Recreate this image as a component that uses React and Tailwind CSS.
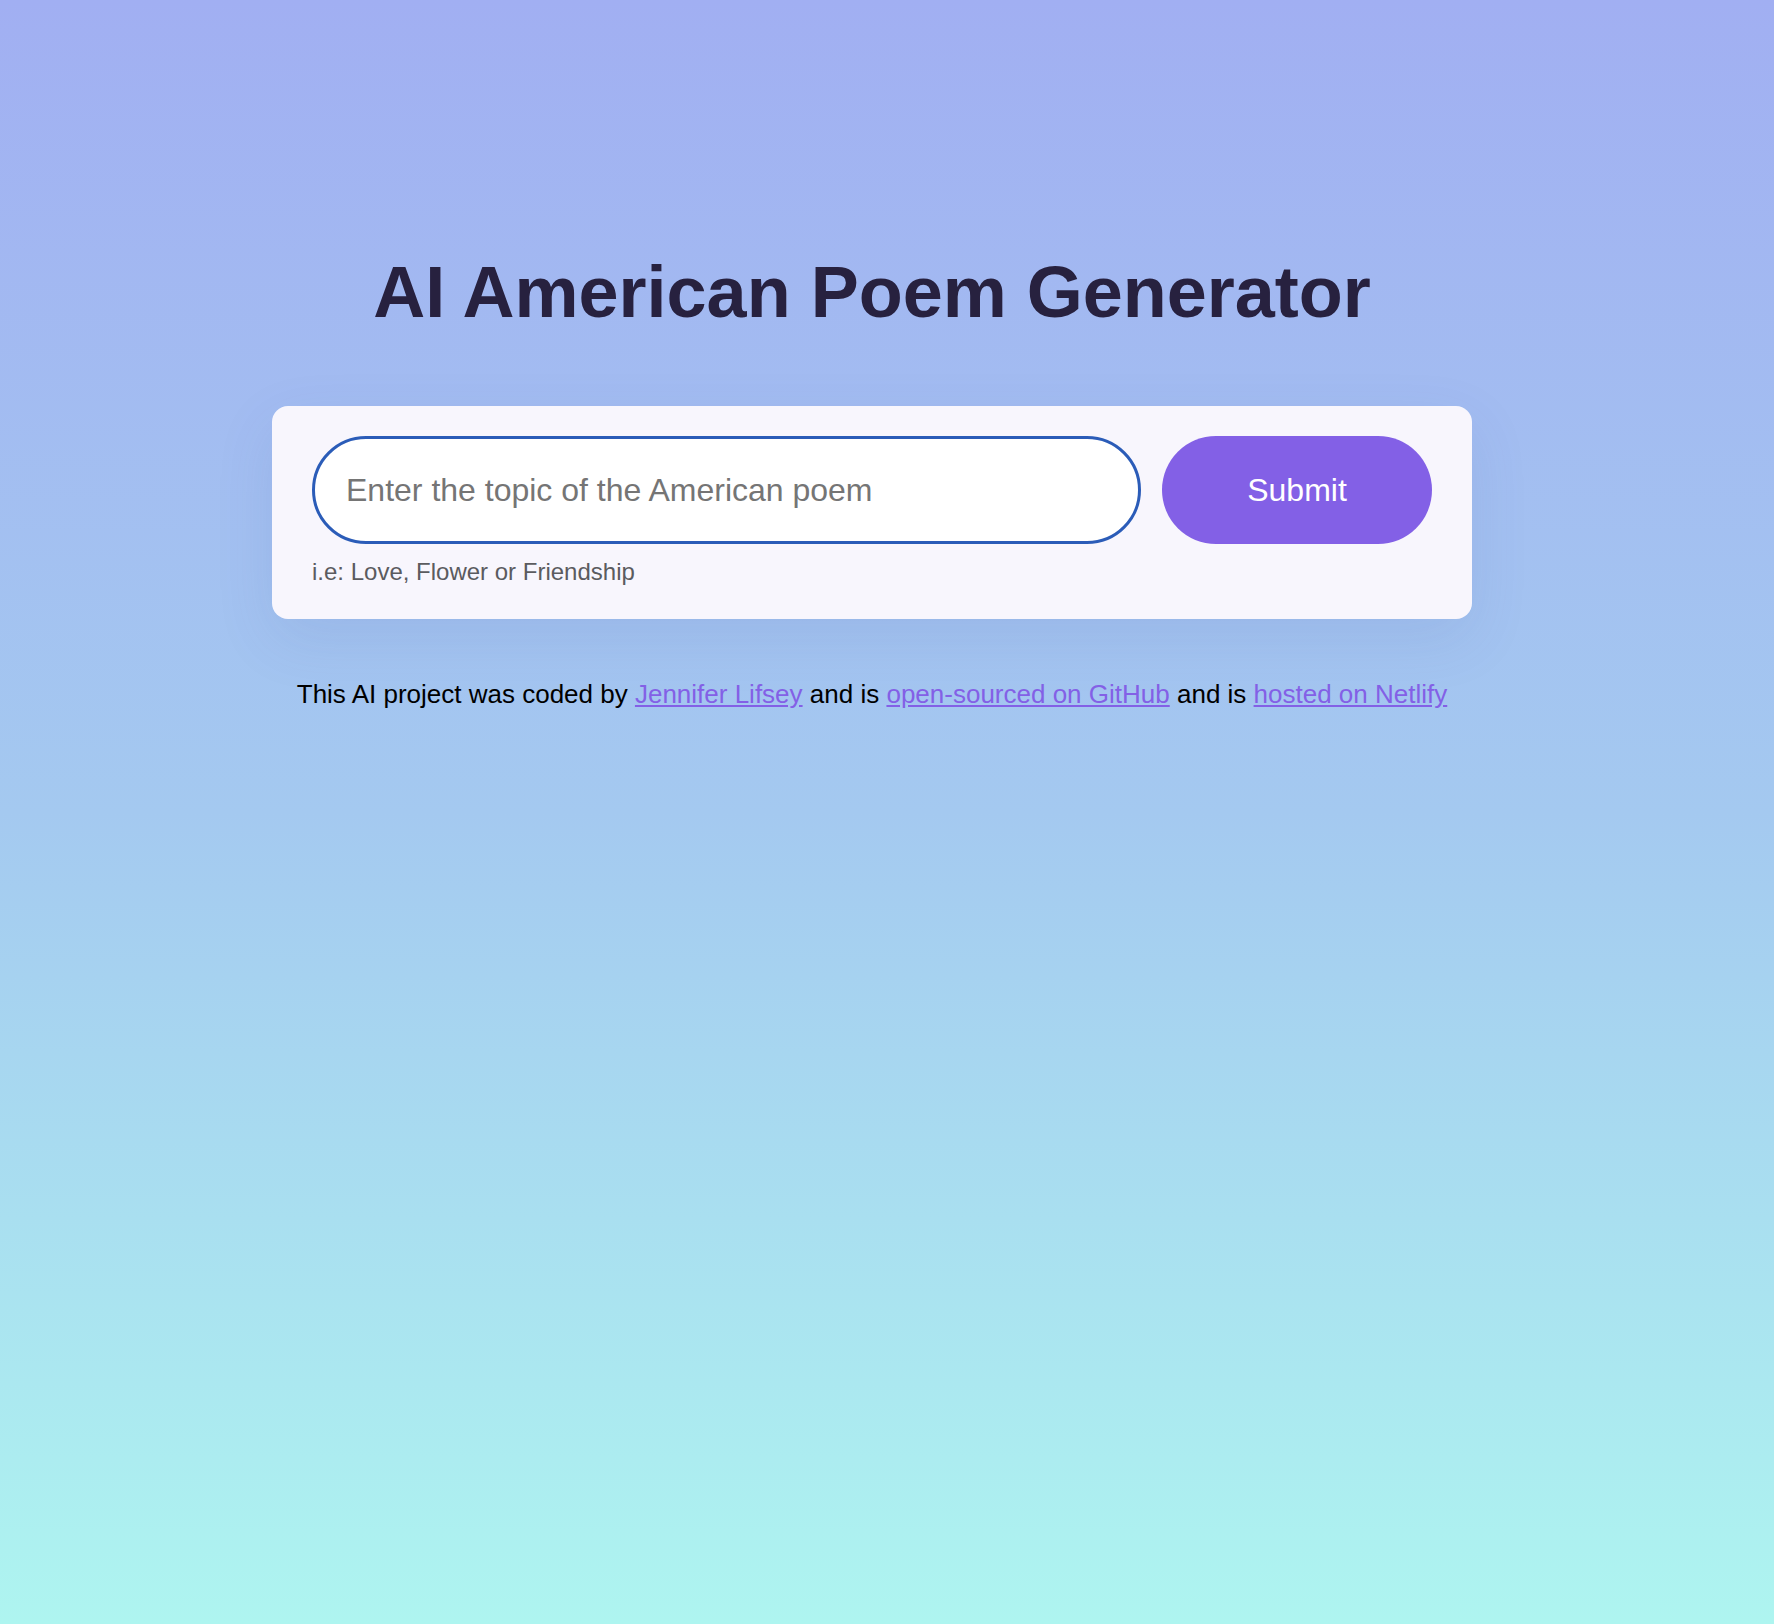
export default function App() {
  return (
    <div
      className="min-h-[1624px] w-full bg-[linear-gradient(to_bottom,#a1aff2_0%,#a4c9f0_50%,#aef5f0_100%)] pr-[30px]"
      style={{ fontFamily: '"Liberation Sans", Arial, Helvetica, sans-serif' }}
    >
      <div className="mx-auto w-[1200px] pt-[256px]">
        {/* Title */}
        <h1 className="text-center text-[72px] font-bold leading-[72px] text-[#27213f]">
          AI American Poem Generator
        </h1>

        {/* Form card */}
        <div className="mt-[78px] rounded-[16px] bg-[#f8f6fd] px-[40px] pt-[30px] pb-[29px] shadow-[0_20px_60px_rgba(60,80,160,0.1)]">
          <form className="flex gap-[21px]" onSubmit={e => e.preventDefault()}>
            <input
              type="text"
              placeholder="Enter the topic of the American poem"
              className="h-[108px] flex-1 rounded-full border-[3px] border-[#2b5cb8] bg-white px-[31px] text-[32px] text-[#222] placeholder:text-[#757575] outline-none"
            />
            <button
              type="submit"
              className="h-[108px] w-[270px] rounded-full bg-[#8360e6] text-[32px] text-white"
            >
              Submit
            </button>
          </form>
          <div className="mt-[10px] text-[24px] leading-[36px] text-[#5b5b5f]">
            i.e: Love, Flower or Friendship
          </div>
        </div>

        {/* Footer */}
        <footer className="mt-[56px] text-center text-[26px] leading-[39px] text-black">
          This AI project was coded by{' '}
          <a href="#" className="text-[#8360e6] underline">Jennifer Lifsey</a> and is{' '}
          <a href="#" className="text-[#8360e6] underline">open-sourced on GitHub</a> and is{' '}
          <a href="#" className="text-[#8360e6] underline">hosted on Netlify</a>
        </footer>
      </div>
    </div>
  );
}
